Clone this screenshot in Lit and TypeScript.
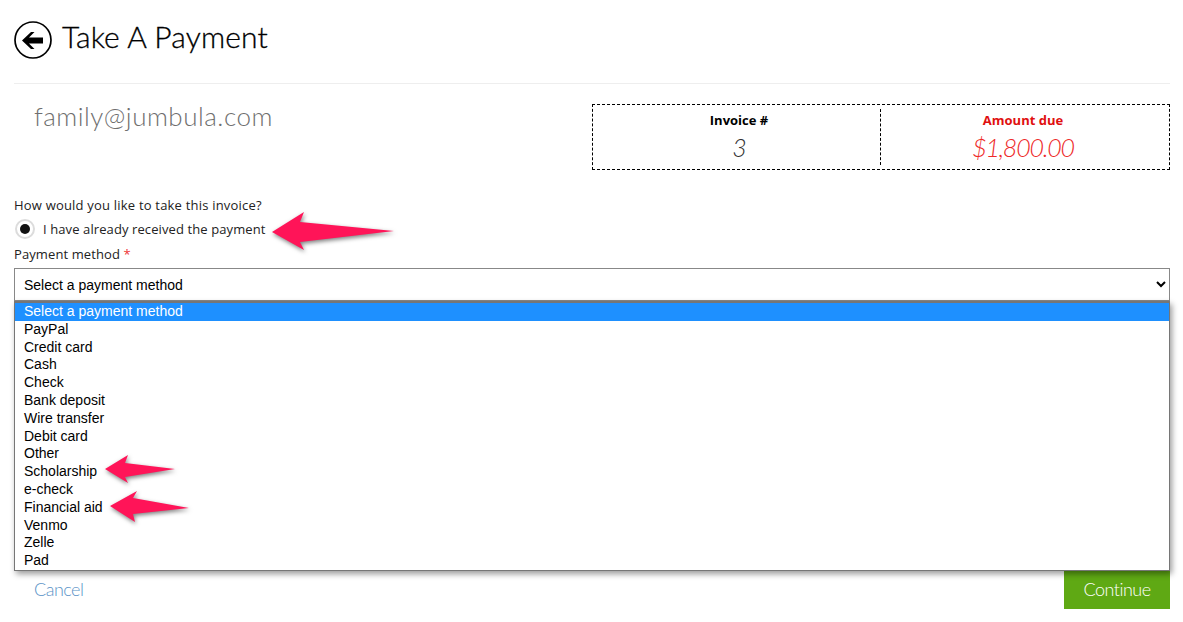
import { LitElement, html, css } from "lit";
import { customElement } from "lit/decorators.js";

const METHODS = ["Select a payment method","PayPal","Credit card","Cash","Check","Bank deposit","Wire transfer","Debit card","Other","Scholarship","e-check","Financial aid","Venmo","Zelle","Pad"];

@customElement("app-root")
export class AppRoot extends LitElement {
  static styles = css`
    :host { display: block; position: relative; height: 622px; overflow: hidden; background: #fff; font-family: "Open Sans", "Noto Sans", sans-serif; color: #222; }
    .page { padding: 0 13px 0 14px; display: flex; flex-direction: column; }
    .header { border-bottom: 1px solid #eee; display: flex; align-items: flex-start; gap: 10px; padding-top: 21px; height: 62px; }
    .back { width: 38px; height: 38px; flex: none; display: block; }
    .title { font-family: "Lato", sans-serif; font-weight: 300; font-size: 30px; line-height: 34px; color: #000; margin: -2px 0 0; letter-spacing: 0.15px; -webkit-text-stroke: 0.3px #000; }
    .summary { display: flex; justify-content: space-between; align-items: flex-start; padding-top: 20px; height: 100px; }
    .email { font-family: "Lato", sans-serif; font-weight: 300; font-size: 26px; line-height: 26px; color: #6f6f6f; margin: -1px 0 0 20px; letter-spacing: 0.5px; }
    .box { width: 576px; border: 1px dashed #000; display: grid; grid-template-columns: 1fr 1fr; padding: 4px 0; height: 56px; }
    .cell { text-align: center; display: flex; flex-direction: column; align-items: center; }
    .cell:first-child { border-right: 1px dashed #000; padding-left: 5px; }
    .cell + .cell { padding-right: 4px; }
    .lbl { font-size: 13px; font-weight: 700; line-height: 20px; color: #000; margin-top: 1px; }
    .val { font-family: "Lato", sans-serif; font-style: italic; font-weight: 300; font-size: 25px; line-height: 34px; color: #333; letter-spacing: -1.2px; }
    .due .lbl { color: #e01010; }
    .due .val { color: #ee2a2a; }
    .question { font-size: 13px; line-height: 18px; color: #222; margin-top: -8px; letter-spacing: 0.2px; }
    .radio-row { display: flex; align-items: center; gap: 8px; height: 26px; margin-top: 2px; font-size: 13px; color: #222; letter-spacing: 0.1px; }
    .radio { width: 20px; height: 20px; margin-left: 1px; border-radius: 50%; background: #fff; border: 2px solid #dcdcdc; box-sizing: border-box; display: flex; align-items: center; justify-content: center; }
    .radio i { display: block; width: 10px; height: 10px; border-radius: 50%; background: #111; }
    .field-label { font-size: 13px; line-height: 18px; margin-top: 3px; color: #222; letter-spacing: 0.1px; }
    .req { color: #e33; }
    select { display: block; width: 100%; height: 33px; margin-top: 5px; padding: 0 5px; font: 14px "Liberation Sans", Arial, sans-serif; color: #000; background: #fff; border: 1px solid #888; border-radius: 0; box-sizing: border-box; }
    .wrap { position: relative; }
    .list { position: absolute; z-index: 2; left: 0; right: 0; top: 38px; background: #fff; border: 1px solid #767676; border-top-width: 2px; box-shadow: 2px 3px 6px rgba(0,0,0,.4); font: 14px "Liberation Sans", Arial, sans-serif; color: #000; }
    .opt { height: 17.8px; line-height: 16px; padding-left: 9px; white-space: nowrap; }
    .opt.sel { background: #1e90ff; color: #fff; }
    .footer { display: flex; justify-content: space-between; align-items: flex-start; margin-top: 270px; }
    .cancel { font-family: "Lato", sans-serif; font-weight: 300; margin: 8px 0 0 20px; font-size: 18px; line-height: 20px; color: #5b93c7; letter-spacing: -0.5px; }
    .continue { width: 106px; height: 38px; padding-bottom: 2px; box-sizing: border-box; background: #5fa914; color: #fff; font-family: "Lato", sans-serif; font-weight: 300; font-size: 18px; letter-spacing: -0.5px; display: flex; align-items: center; justify-content: center; }
    .marks { position: absolute; z-index: 3; left: 0; top: 0; width: 1183px; height: 622px; pointer-events: none; }
    .marks polygon { fill: #ff1458; filter: drop-shadow(1px 2px 2px rgba(0,0,0,.5)); }
  `;

  render() {
    return html`
      <div class="page">
        <div class="header">
          <svg class="back" viewBox="0 0 38 38">
            <circle cx="19" cy="19" r="18" fill="#fff" stroke="#000" stroke-width="1.7"/>
            <path d="M8 19.5 L17 11 H20.5 L15 16.5 H29 V22.5 H15 L20.5 28 H17 Z" fill="#000"/>
          </svg>
          <h1 class="title">Take A Payment</h1>
        </div>
        <div class="summary">
          <p class="email">family@jumbula.com</p>
          <div class="box">
            <div class="cell"><span class="lbl">Invoice #</span><span class="val">3</span></div>
            <div class="cell due"><span class="lbl">Amount due</span><span class="val">$1,800.00</span></div>
          </div>
        </div>
        <div class="question">How would you like to take this invoice?</div>
        <div class="radio-row"><span class="radio"><i></i></span><span>I have already received the payment</span></div>
        <div class="field-label">Payment method <span class="req">*</span></div>
        <div class="wrap">
          <select><option>Select a payment method</option></select>
          <div class="list">
            ${METHODS.map((m, i) => html`<div class="opt ${i === 0 ? "sel" : ""}">${m}</div>`)}
          </div>
        </div>
        <div class="footer">
          <span class="cancel">Cancel</span>
          <span class="continue">Continue</span>
        </div>
      </div>
      <svg class="marks" viewBox="0 0 1183 622">
        <polygon points="272,232 304,212 300,222 394,231 300,242 304,250"/>
        <polygon points="105,469 128,455 125,463 175,469 125,477 128,483"/>
        <polygon points="110,506 137,491 133,498 189,508 133,514 135,522"/>
      </svg>
    `;
  }
}
